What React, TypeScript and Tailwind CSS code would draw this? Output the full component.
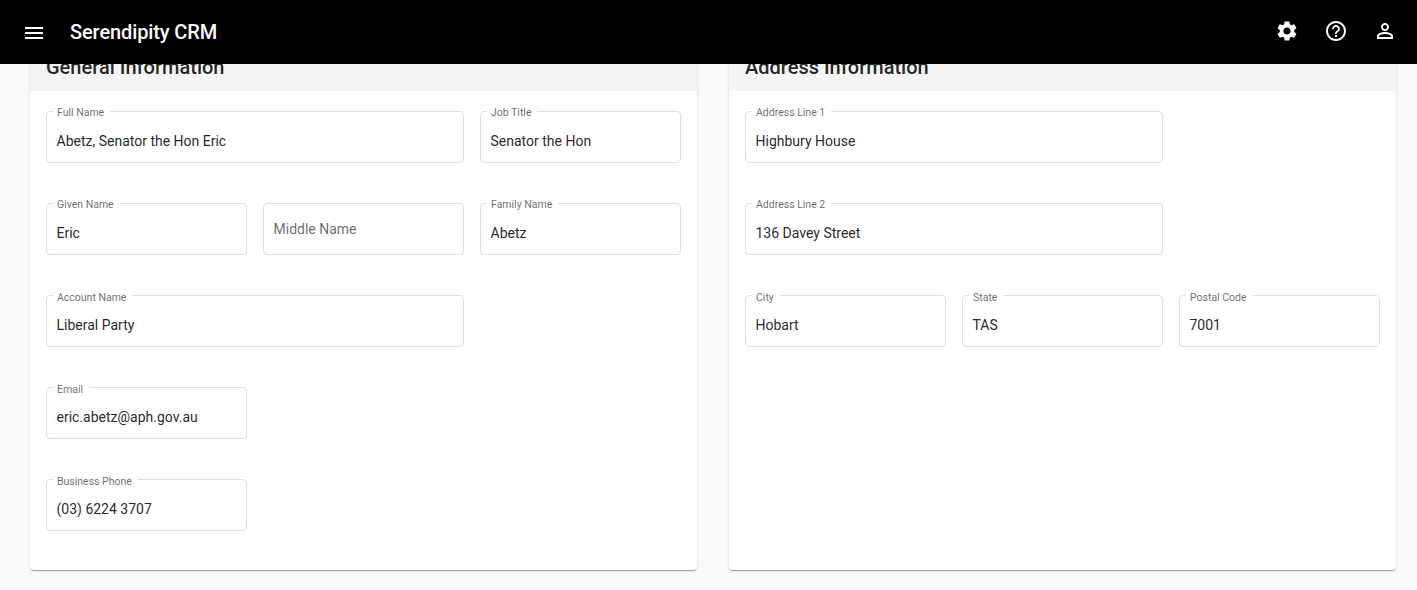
import React from 'react';

type FieldProps = { label: string; value?: string; wide?: boolean; low?: boolean; className?: string };

function Field({ label, value, wide = false, low = false, className = '' }: FieldProps) {
  return (
    <div
      className={`relative h-[52px] rounded-[4px] border border-[#dfdfdf] px-[9.5px] text-[14px] leading-[20px] ${
        wide ? 'col-span-2' : ''
      } ${className}`}
    >
      {value ? (
        <>
          <label
            className={`absolute left-[6px] bg-white pr-[6px] pl-[4px] text-[10.5px] leading-[16px] whitespace-nowrap text-black/60 ${
              low ? '-top-[6px]' : '-top-[7px]'
            }`}
          >
            {label}
          </label>
          <div className="pt-[19px] text-black/87">{value}</div>
        </>
      ) : (
        <div className="pt-[15px] text-black/60">{label}</div>
      )}
    </div>
  );
}

function Card({ title, children }: { title: string; children: React.ReactNode }) {
  return (
    <section className="h-[536px] w-[667px] rounded-[4px] bg-white shadow-[0_2px_1px_-1px_rgba(0,0,0,0.2),0_1px_1px_0_rgba(0,0,0,0.14),0_1px_3px_0_rgba(0,0,0,0.12)]">
      <header className="h-[57px] rounded-t-[4px] bg-[#f4f4f4] px-4 pt-[17px]">
        <h2 className="text-[20px] leading-[32px] font-medium text-black/87">{title}</h2>
      </header>
      <div className="grid grid-cols-[repeat(3,201px)] gap-x-4 gap-y-10 px-4 pt-5">{children}</div>
    </section>
  );
}

function Icon({ d }: { d: string }) {
  return (
    <svg viewBox="0 0 24 24" className="h-6 w-6 fill-current" aria-hidden="true">
      <path d={d} />
    </svg>
  );
}

const icons = {
  menu: 'M3 18h18v-2H3v2zm0-5h18v-2H3v2zm0-7v2h18V6H3z',
  settings:
    'M19.14 12.94c.04-.3.06-.61.06-.94 0-.32-.02-.64-.07-.94l2.03-1.58c.18-.14.23-.41.12-.61l-1.92-3.32c-.12-.22-.37-.29-.59-.22l-2.39.96c-.5-.38-1.03-.7-1.62-.94l-.36-2.54c-.04-.24-.24-.41-.48-.41h-3.84c-.24 0-.43.17-.47.41l-.36 2.54c-.59.24-1.13.57-1.62.94l-2.39-.96c-.22-.08-.47 0-.59.22L2.74 8.87c-.12.21-.08.47.12.61l2.03 1.58c-.05.3-.09.63-.09.94s.02.64.07.94l-2.03 1.58c-.18.14-.23.41-.12.61l1.92 3.32c.12.22.37.29.59.22l2.39-.96c.5.38 1.03.7 1.62.94l.36 2.54c.05.24.24.41.48.41h3.84c.24 0 .44-.17.47-.41l.36-2.54c.59-.24 1.13-.56 1.62-.94l2.39.96c.22.08.47 0 .59-.22l1.92-3.32c.12-.22.07-.47-.12-.61l-2.01-1.58zM12 15.6c-1.98 0-3.6-1.62-3.6-3.6s1.62-3.6 3.6-3.6 3.6 1.62 3.6 3.6-1.62 3.6-3.6 3.6z',
  help: 'M11 18h2v-2h-2v2zm1-16C6.48 2 2 6.48 2 12s4.48 10 10 10 10-4.48 10-10S17.52 2 12 2zm0 18c-4.41 0-8-3.59-8-8s3.59-8 8-8 8 3.59 8 8-3.59 8-8 8zm0-14c-2.21 0-4 1.79-4 4h2c0-1.1.9-2 2-2s2 .9 2 2c0 2-3 1.75-3 5h2c0-2.25 3-2.5 3-5 0-2.21-1.79-4-4-4z',
  person:
    'M12 5.9c1.16 0 2.1.94 2.1 2.1s-.94 2.1-2.1 2.1S9.9 9.16 9.9 8s.94-2.1 2.1-2.1m0 9c2.97 0 6.1 1.46 6.1 2.1v1.1H5.9V17c0-.64 3.13-2.1 6.1-2.1M12 4C9.79 4 8 5.79 8 8s1.79 4 4 4 4-1.79 4-4-1.79-4-4-4zm0 9c-2.67 0-8 1.34-8 4v3h16v-3c0-2.66-5.33-4-8-4z',
};

export default function App() {
  return (
    <div className="flex h-[590px] w-[1417px] flex-col overflow-hidden bg-[#fafafa] font-[Roboto,sans-serif]">
      <header className="z-10 flex h-16 shrink-0 items-center bg-black pr-5 pl-[22px] text-white">
        <button aria-label="Menu" className="pt-[2px]">
          <Icon d={icons.menu} />
        </button>
        <h1 className="ml-6 text-[20px] leading-[32px] font-medium tracking-[-0.11px]">Serendipity CRM</h1>
        <nav className="ml-auto flex gap-[25px] pb-[2px]">
          <button aria-label="Settings"><Icon d={icons.settings} /></button>
          <button aria-label="Help"><Icon d={icons.help} /></button>
          <button aria-label="Account"><Icon d={icons.person} /></button>
        </nav>
      </header>
      <main className="-mt-[30px] flex gap-8 pl-[30px]">
        <Card title="General Information">
          <Field label="Full Name" value="Abetz, Senator the Hon Eric" wide />
          <Field label="Job Title" value="Senator the Hon" />
          <Field label="Given Name" value="Eric" />
          <Field label="Middle Name" />
          <Field label="Family Name" value="Abetz" />
          <Field label="Account Name" value="Liberal Party" wide low />
          <Field label="Email" value="eric.abetz@aph.gov.au" low className="col-start-1" />
          <Field label="Business Phone" value="(03) 6224 3707" low className="col-start-1" />
        </Card>
        <Card title="Address Information">
          <Field label="Address Line 1" value="Highbury House" wide />
          <Field label="Address Line 2" value="136 Davey Street" wide className="col-start-1" />
          <Field label="City" value="Hobart" low className="col-start-1" />
          <Field label="State" value="TAS" low />
          <Field label="Postal Code" value="7001" low />
        </Card>
      </main>
    </div>
  );
}
